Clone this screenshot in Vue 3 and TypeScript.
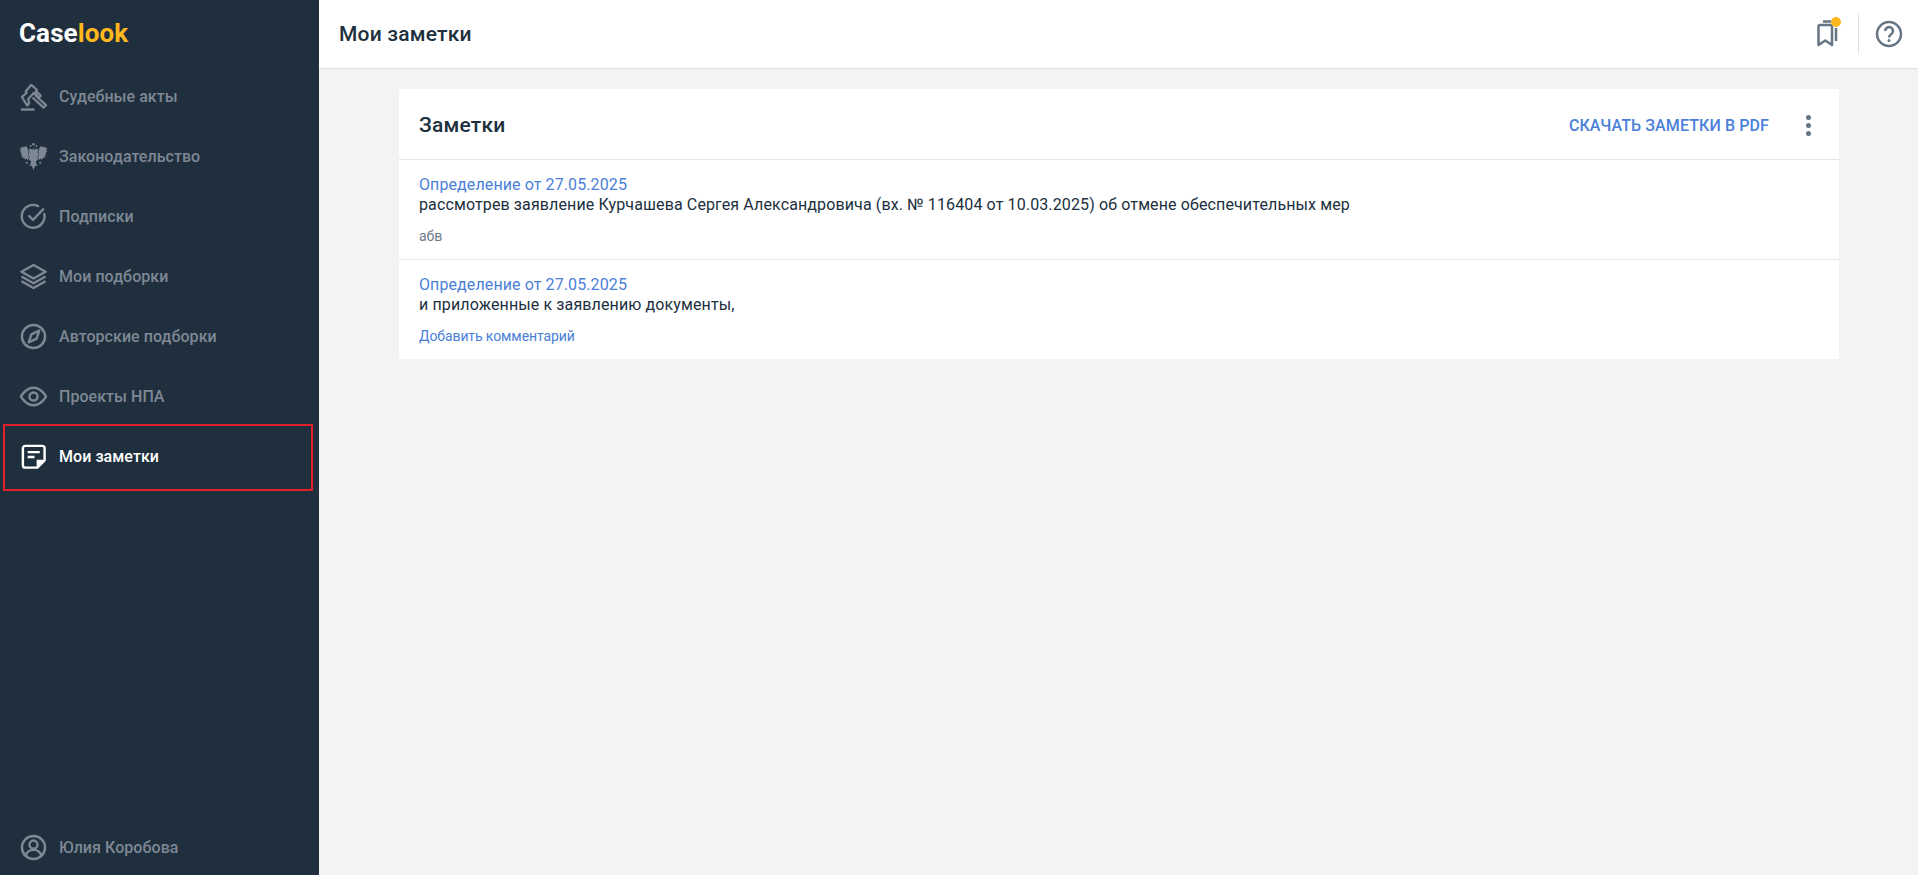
<script setup lang="ts">
const nav = [
  { label: 'Судебные акты', icon: 'gavel' },
  { label: 'Законодательство', icon: 'eagle' },
  { label: 'Подписки', icon: 'check' },
  { label: 'Мои подборки', icon: 'layers' },
  { label: 'Авторские подборки', icon: 'compass' },
  { label: 'Проекты НПА', icon: 'eye' },
  { label: 'Мои заметки', icon: 'note', active: true },
]
const notes = [
  { title: 'Определение от 27.05.2025', text: 'рассмотрев заявление Курчашева Сергея Александровича (вх. № 116404 от 10.03.2025) об отмене обеспечительных мер', comment: 'абв', add: false },
  { title: 'Определение от 27.05.2025', text: 'и приложенные к заявлению документы,', comment: 'Добавить комментарий', add: true },
]
</script>

<template>
  <div class="app">
    <aside class="side">
      <div class="logo">Case<span>look</span></div>
      <nav class="nav">
        <a v-for="n in nav" :key="n.label" class="item" :class="{ active: n.active }">
          <svg class="ic" viewBox="0 0 28 28" fill="none" stroke="currentColor" stroke-width="2.5">
            <template v-if="n.icon === 'gavel'">
              <path d="M1 27.500h14" />
              <path d="M2 14.500 7 10l-1-1.500L11.500 2 13 3l4.500 4-1 1.500 5 4.500-1.500 2-5.500-5-6 6.500 1 4.500-2 2.500z" stroke-width="2.300" stroke-linejoin="round" />
              <path d="M15.500 12.500 27 23l-2.500 2.500L13 15" stroke-width="2.300" stroke-linejoin="round" />
            </template>
            <template v-else-if="n.icon === 'eagle'">
              <g fill="currentColor" stroke="none">
                <circle cx="14" cy="1.300" r="1.400" />
                <circle cx="11" cy="3" r="1" />
                <circle cx="17" cy="3" r="1" />
                <circle cx="7" cy="20.500" r="1.100" />
                <circle cx="21" cy="20.500" r="1.100" />
                <path d="M14 5l1.200 2.500 1.500-1.900 2 .500-.5 3.400 1 2.200-1.200 3.200.8 2.200-2.300 1.800.6 3.300 1.400 1.600-2.500-.200L14.800 26 14 28.300 13.200 26l-1.200-2.400-2.500.200 1.400-1.600.6-3.300-2.300-1.800.8-2.200-1.200-3.200 1-2.200-.5-3.400 2-.5 1.500 1.900z" />
                <path d="M7.500 4.500 9 8.500l-.5 3.500 1 3-1.500 2.500-1.500-1.500-1 1.500-1-2.300-1.500 1-.5-2.600-1.500.6L2 11.500.2 11 1.500 9.300-.6 8.400 1.200 7-.6 5.200 1.800 4.800l.5-1.500 1.700 1.400L5.600 3z" />
                <path d="M20.500 4.500 19 8.500l.5 3.500-1 3 1.500 2.500 1.500-1.500 1 1.500 1-2.300 1.500 1 .5-2.600 1.500.6-1-2.700 1.800-.5-1.300-1.700 2.100-.9L26.800 7l1.800-1.800-2.400-.4-.5-1.500-1.700 1.400L22.400 3z" />
              </g>
            </template>
            <template v-else-if="n.icon === 'check'">
              <path d="M25.200 11.500A11.800 11.800 0 1 1 18.800 3.200" stroke-linecap="round" />
              <path d="M9.500 13.500l4 4L24 6.500" stroke-linecap="round" stroke-linejoin="round" />
            </template>
            <template v-else-if="n.icon === 'layers'">
              <path d="M14 2 26.500 9 14 16 1.500 9z" stroke-linejoin="round" />
              <path d="M1.500 14 14 21l12.500-7" stroke-linejoin="round" />
              <path d="M1.500 19 14 26l12.500-7" stroke-linejoin="round" />
            </template>
            <template v-else-if="n.icon === 'compass'">
              <circle cx="14" cy="14" r="12" />
              <path d="M20 8l-2.800 8.200L9 20l2.800-8.200z" stroke-linejoin="round" />
            </template>
            <template v-else-if="n.icon === 'eye'">
              <path d="M1 14s4.800-9 13-9 13 9 13 9-4.800 9-13 9-13-9-13-9z" stroke-linejoin="round" />
              <circle cx="14" cy="14" r="4.200" />
            </template>
            <template v-else-if="n.icon === 'note'">
              <path d="M18 25.500H5.500A2.500 2.500 0 0 1 3 23V5.500A2.500 2.500 0 0 1 5.500 3H23a2.500 2.500 0 0 1 2.500 2.500V18z" stroke-linejoin="round" />
              <path d="M18.500 25V18.500H25" fill="currentColor" />
              <path d="M8 9.500h12.500M8 14.500h7" />
            </template>
          </svg>
          <span>{{ n.label }}</span>
        </a>
      </nav>
      <div class="item user">
        <svg class="ic" viewBox="0 0 28 28" fill="none" stroke="currentColor" stroke-width="2.500">
          <circle cx="14" cy="14" r="12" />
          <circle cx="14" cy="11" r="4.200" />
          <path d="M6 22.500c1-4 4-6 8-6s7 2 8 6" />
        </svg>
        <span>Юлия Коробова</span>
      </div>
    </aside>

    <div class="main">
      <header class="top">
        <h1>Мои заметки</h1>
        <div class="tools">
          <span class="mark">
            <svg width="28" height="28" viewBox="0 0 28 28" fill="none" stroke="#667584" stroke-width="2.500">
              <path d="M4.500 25V6.500A1.500 1.500 0 0 1 6 5h10.500A1.500 1.500 0 0 1 18 6.500V25l-6.700-4.500z" stroke-linejoin="round" />
              <path d="M9 1.500h8" />
              <path d="M22 8v13" />
            </svg>
            <i class="dot"></i>
          </span>
          <span class="sep"></span>
          <svg width="28" height="28" viewBox="0 0 28 28" fill="none" stroke="#667584" stroke-width="2.500">
            <circle cx="14" cy="14" r="12" />
            <path d="M10.200 11a3.900 3.900 0 1 1 6 3.300c-1.300.9-2.200 1.500-2.200 3.200" />
            <circle cx="14" cy="20.500" r="1.500" fill="#667584" stroke="none" />
          </svg>
        </div>
      </header>

      <main class="content">
        <section class="card">
          <div class="head">
            <h2>Заметки</h2>
            <a class="pdf">СКАЧАТЬ ЗАМЕТКИ В PDF</a>
            <span class="more"><i></i><i></i><i></i></span>
          </div>
          <article v-for="(n, i) in notes" :key="i" class="note">
            <a class="title">{{ n.title }}</a>
            <p>{{ n.text }}</p>
            <small :class="{ add: n.add }">{{ n.comment }}</small>
          </article>
        </section>
      </main>
    </div>
  </div>
</template>

<style>
html, body { margin: 0; padding: 0; }
</style>

<style scoped>
.app {
  display: flex;
  height: 875px;
  overflow: hidden;
  font-family: Roboto, "Liberation Sans", sans-serif;
  background: #f3f3f3;
  color: #202f3e;
}
.side {
  width: 319px;
  flex: none;
  background: #202f3e;
  display: flex;
  flex-direction: column;
}
.logo {
  height: 66px;
  box-sizing: border-box;
  padding: 17px 0 0 19px;
  font-size: 26px;
  font-weight: 700;
  line-height: 32px;
  letter-spacing: 0.1px;
  color: #fff;
}
.logo span { color: #fdb81e; }
.nav { display: flex; flex-direction: column; flex: 1; }
.item {
  position: relative;
  height: 60px;
  flex: none;
  display: flex;
  align-items: center;
  gap: 12px;
  padding-left: 20px;
  font-size: 16px;
  font-weight: 500;
  letter-spacing: 0.05px;
  color: #7e8894;
}
.ic { width: 27px; height: 27px; flex: none; overflow: visible; }
.item.active { color: #fff; }
.item.active::after {
  content: "";
  position: absolute;
  left: 3px;
  top: -2px;
  width: 310px;
  height: 67px;
  box-sizing: border-box;
  border: 2px solid #e5202a;
}
.user { height: 55px; }
.main { flex: 1; min-width: 0; display: flex; flex-direction: column; }
.top {
  height: 69px;
  box-sizing: border-box;
  flex: none;
  background: #fff;
  border-bottom: 1px solid #dfe2e6;
  display: flex;
  align-items: center;
  justify-content: space-between;
  padding: 0 15px 0 20px;
}
h1 { margin: 0; font-size: 21px; font-weight: 500; line-height: 28px; letter-spacing: 0.2px; }
.tools { display: flex; align-items: center; }
.mark { position: relative; display: block; width: 28px; height: 28px; margin-right: 16px; }
.mark svg { display: block; overflow: visible; }
.dot {
  position: absolute;
  right: 1px;
  top: -3px;
  width: 10px;
  height: 10px;
  border-radius: 50%;
  background: #fdb81e;
}
.sep { width: 1px; height: 40px; background: #dfe2e6; margin-right: 16px; }
.content { padding: 20px 79px 0 80px; }
.card { background: #fff; }
.head {
  height: 68px;
  display: flex;
  align-items: center;
  padding: 2px 28px 0 20px;
  border-bottom: 1px solid #e6e6e6;
}
h2 { margin: 0; flex: 1; font-size: 21px; font-weight: 500; line-height: 28px; letter-spacing: 0.2px; }
.pdf { font-size: 16px; font-weight: 500; letter-spacing: 0.1px; color: #4a80d8; }
.more { display: flex; flex-direction: column; gap: 3px; margin-left: 37px; width: 5px; }
.more i { width: 5px; height: 5px; border-radius: 50%; background: #667584; }
.note { padding: 15px 20px 13px; border-bottom: 1px solid #e6e6e6; }
.note:last-child { border-bottom: 0; }
.title { display: block; font-size: 16px; line-height: 20px; letter-spacing: 0.1px; color: #4a80d8; }
.note p { margin: 0; font-size: 16px; line-height: 20px; letter-spacing: 0.12px; color: #202f3e; }
.note small { display: block; margin-top: 11px; font-size: 14px; line-height: 20px; letter-spacing: -0.1px; color: #6d7a88; }
.note small.add { color: #4a80d8; }
</style>
